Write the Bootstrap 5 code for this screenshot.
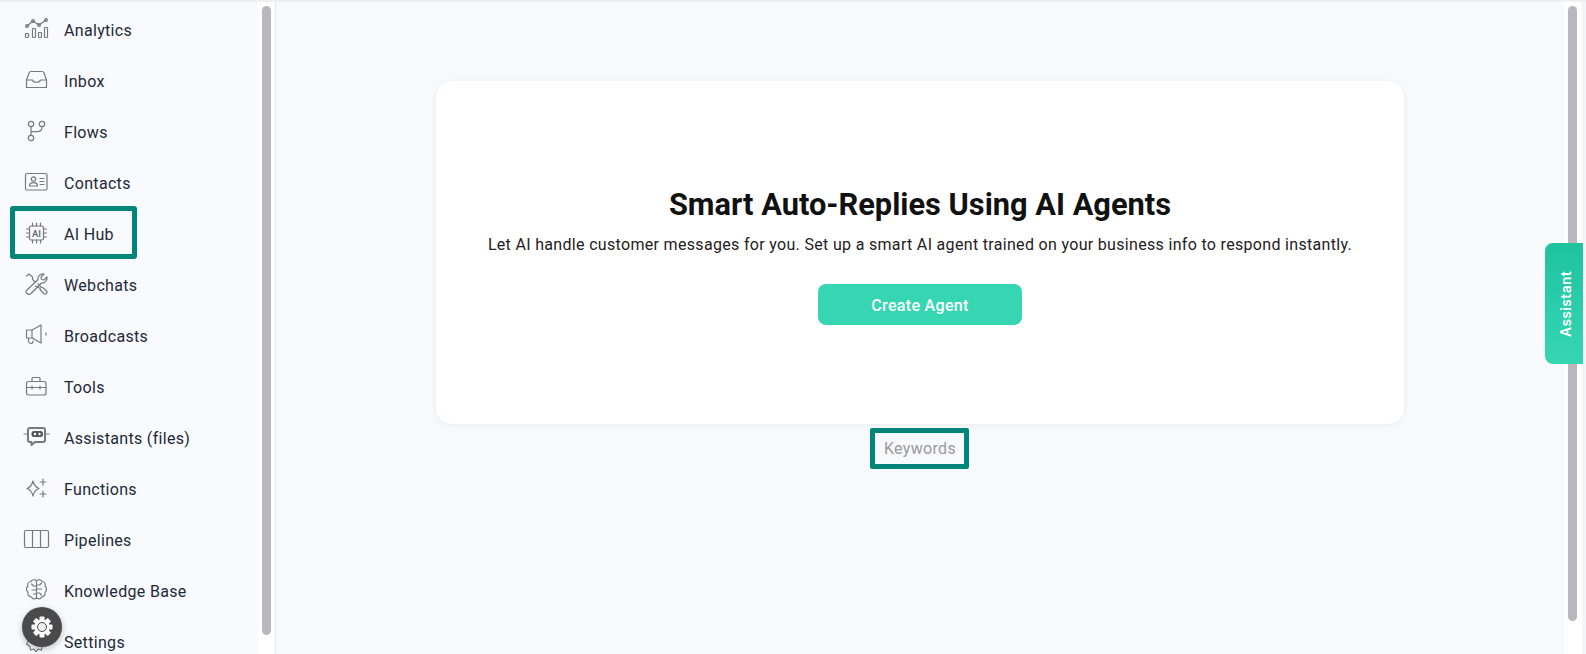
<!DOCTYPE html>
<html lang="en">
<head>
    <meta charset="UTF-8">
    <meta name="viewport" content="width=device-width, initial-scale=1.0">
    <title>AI Hub</title>
    <link href="https://cdn.jsdelivr.net/npm/bootstrap@5.3.0/dist/css/bootstrap.min.css" rel="stylesheet">
    <style>
        html, body { height: 100%; }
        body { font-family: Roboto, "Liberation Sans", sans-serif; font-size: 16px; letter-spacing: .32px; color: #1f2937; background: #fff; overflow: hidden; }
        .app-shell { height: 100vh; position: relative; }
        .top-strip { height: 2px; background: #eef0f3; flex: none; }
        .side-panel { width: 258px; background: #f8fafd; padding-top: 3px; overflow: hidden; flex: none; }
        .side-link { height: 51px; padding: 0 0 0 22px; color: #1f2937; position: relative; flex: none; }
        .side-link:hover { color: #1f2937; }
        .side-link svg { width: 28px; height: 24px; margin-right: 14px; margin-bottom: 6px; flex: none; fill: none; stroke: #78787f; stroke-width: 1.2; stroke-linecap: round; stroke-linejoin: round; }
        .side-link svg text { font-family: Roboto, sans-serif; font-size: 9.5px; font-weight: 500; letter-spacing: 0; fill: #5f5f68; stroke: none; }
        .mark-hub { position: absolute; left: 10px; top: -3px; width: 127px; height: 53px; border: 5px solid #00857a; border-radius: 3px; }
        .rail { width: 18px; padding: 4px 0 0 4px; background: #fff; flex: none; }
        .rail-left { border-right: 1px solid #e6e8eb; }
        .rail-thumb { width: 9px; background: #b9b8be; border-radius: 5px; }
        .thumb-left { height: 629px; }
        .thumb-right { height: 615px; }
        .edge-fade { width: 4px; background: #f4f5f6; flex: none; }
        .main-area { background: #f8f9fb; padding-top: 79px; min-width: 0; }
        .hero-box { width: 968px; height: 343px; background: #fff; border-radius: 16px; box-shadow: 0 1px 6px rgba(0, 0, 0, .06); padding-top: 106px; flex: none; }
        .hero-title { font-size: 30.8px; font-weight: 700; line-height: 36px; letter-spacing: 0; color: #111; margin-bottom: 10px; }
        .hero-text { line-height: 24px; color: #1f2023; margin-bottom: 27px; }
        .btn-agent { width: 204px; height: 41px; background: #36d6b3; color: #fff; font-weight: 500; letter-spacing: .32px; border: 0; border-radius: 8px; padding: 3px 0 0; }
        .btn-agent:hover { background: #36d6b3; color: #fff; }
        .keyword-tab { margin-top: 4px; margin-right: 2px; padding-left: 2px; width: 99px; height: 41px; border: 5px solid #00857a; border-radius: 2px; color: #9a9aa2; }
        .gear-fab { position: absolute; left: 22px; top: 607px; width: 40px; height: 40px; border-radius: 50%; background: #4a4a4a; box-shadow: 0 2px 6px rgba(0, 0, 0, .25); }
        .assistant-tab { position: absolute; top: 243px; right: 3px; width: 38px; height: 121px; padding-right: 3px; border-radius: 0 8px 8px 0; background: linear-gradient(#36d6b3, #1fc29f); color: #fff; font-family: Inter, sans-serif; font-size: 14px; font-weight: 600; letter-spacing: .3px; writing-mode: vertical-rl; transform: rotate(180deg); }
    </style>
</head>
<body>
    <div class="app-shell d-flex flex-column">
        <div class="top-strip"></div>
        <div class="d-flex flex-grow-1" style="min-height: 0">
            <nav class="side-panel nav flex-column flex-nowrap">
                <a class="nav-link side-link d-flex align-items-center" href="#">
                    <svg viewBox="0 0 28 24"><path d="M5 10 11 5 17 9 24 4"/><circle cx="5" cy="10" r="1.4"/><circle cx="11" cy="5" r="1.4"/><circle cx="17" cy="9" r="1.4"/><circle cx="24" cy="4" r="1.4"/><rect x="3.5" y="17.5" width="3" height="4" rx=".8"/><rect x="10.5" y="12.5" width="3" height="9" rx=".8"/><rect x="16.5" y="16.5" width="3" height="5" rx=".8"/><rect x="22.5" y="11.5" width="3" height="10" rx=".8"/></svg>
                    Analytics
                </a>
                <a class="nav-link side-link d-flex align-items-center" href="#">
                    <svg viewBox="0 0 28 24"><path d="M4.5 20.5V13L7 6q.5-1.500 2-1.500h11q1.500 0 2 1.500l2.500 7v7.500zM4.500 13h6c1 3 7 3 8 0h6"/></svg>
                    Inbox
                </a>
                <a class="nav-link side-link d-flex align-items-center" href="#">
                    <svg viewBox="0 0 28 24"><circle cx="9" cy="6" r="2.700"/><circle cx="20" cy="6" r="2.700"/><circle cx="9" cy="20" r="2.700"/><path d="M9 8.700v8.600M20 8.700c0 3.300-2 5-5 5H9"/></svg>
                    Flows
                </a>
                <a class="nav-link side-link d-flex align-items-center" href="#">
                    <svg viewBox="0 0 28 24"><rect x="3.500" y="4.500" width="21.500" height="16.500" rx="1.500"/><circle cx="11.500" cy="10" r="2.200"/><path d="M7.500 17c0-4.500 8-4.500 8 0zM18 9.500h4M18 12.500h4M18 15.500h4"/></svg>
                    Contacts
                </a>
                <a class="nav-link side-link d-flex align-items-center" href="#">
                    <svg viewBox="0 0 28 24"><rect x="7.500" y="6" width="14" height="14" rx="1.500"/><path d="M10.500 3v3M14.500 3v3M18.500 3v3M10.500 20v3M14.500 20v3M18.500 20v3M4.500 9h3M4.500 13h3M4.500 17h3M21.500 9h3M21.500 13h3M21.500 17h3"/><text x="14.500" y="16.500" text-anchor="middle">AI</text></svg>
                    AI Hub
                    <span class="mark-hub"></span>
                </a>
                <a class="nav-link side-link d-flex align-items-center" href="#">
                    <svg viewBox="0 0 28 24"><path d="M4.500 5 7 3l3.500 3v2.300l2.500 2.700M16 13l3.500 3.500 1.500.2 3.500 3.300a1.800 1.800 0 0 1-2.800 2.300L18.200 19v-1.500L13.500 15"/><path d="M4.500 19.500 16 8.500c-.5-3 2-6 6-5.500l-3 3 .5 2.500 2.500.5 3-3c.5 4-2.500 6.500-5.500 6L8.500 23c-2 1.500-5.500-1.500-4-3.500z"/></svg>
                    Webchats
                </a>
                <a class="nav-link side-link d-flex align-items-center" href="#">
                    <svg viewBox="0 0 28 24"><path d="M4.500 8h5.500v8H4.500zM10 8l9-5v18l-9-5M7 16c-1.500 3 0 5.500 2 5.500 1 0 2-1 2-2.500M24 11v2"/></svg>
                    Broadcasts
                </a>
                <a class="nav-link side-link d-flex align-items-center" href="#">
                    <svg viewBox="0 0 28 24"><rect x="4.500" y="8.500" width="19.500" height="13.500" rx="2"/><path d="M10 8.500v-3a1 1 0 0 1 1-1h6a1 1 0 0 1 1 1v3M4.500 14.500H24M10 13v3M18 13v3"/></svg>
                    Tools
                </a>
                <a class="nav-link side-link d-flex align-items-center" href="#">
                    <svg viewBox="0 0 28 24"><path d="M8 4h13a2 2 0 0 1 2 2v10a2 2 0 0 1-2 2h-8l-3.500 3v-3H8a2 2 0 0 1-2-2V6a2 2 0 0 1 2-2z" stroke-width="2"/><path d="M2 10h4M23 10h4"/><rect x="9.500" y="7" width="11.500" height="6" rx="2.500" fill="#55555c" stroke="none"/><circle cx="13" cy="10" r="1.200" fill="#f8fafd" stroke="none"/><circle cx="17.500" cy="10" r="1.200" fill="#f8fafd" stroke="none"/></svg>
                    Assistants (files)
                </a>
                <a class="nav-link side-link d-flex align-items-center" href="#">
                    <svg viewBox="0 0 28 24"><path d="M11 6q1.500 6 6 7.500-4.500 1.500-6 7.500-1.500-6-6-7.500 4.500-1.500 6-7.500zM21 4v6M18 7h6M21 16v6M18 19h6"/></svg>
                    Functions
                </a>
                <a class="nav-link side-link d-flex align-items-center" href="#">
                    <svg viewBox="0 0 28 24"><rect x="2.500" y="4.500" width="24" height="17" rx="1.500"/><path d="M10.500 4.500v17M18.500 4.500v17"/></svg>
                    Pipelines
                </a>
                <a class="nav-link side-link d-flex align-items-center" href="#">
                    <svg viewBox="0 0 28 24"><path d="M14.500 4c-1.500-2-5-1.500-5.500.5-2.500 0-4 2.500-3 4.500-2 1.500-2 5 0 6.500-.5 2.500 1 4.500 3.500 4.500 1 2.500 4 2.500 5 .5 1 2 4 2 5-.5 2.500 0 4-2 3.500-4.500 2-1.500 2-5 0-6.500 1-2-.5-4.500-3-4.500-.5-2-4-2.500-5.500-.5zM14.500 4v17.500M14.500 9h-3l-2-2M14.500 13H10M14.500 17h-3M14.500 8h3l2-2M14.500 12h5M14.500 16h3l2 2"/></svg>
                    Knowledge Base
                </a>
                <a class="nav-link side-link d-flex align-items-center" href="#">
                    <svg viewBox="0 0 28 24"><circle cx="14" cy="13" r="3"/><path d="M14 4l2 3 3.500-1 .5 3.500 3.500 1.500-2 3 2 3-3.500 1.500-.5 3.500-3.500-1-2 3-2-3-3.500 1-.5-3.500L4.500 16l2-3-2-3L8 8.500 8.500 5 12 6z"/></svg>
                    Settings
                </a>
            </nav>
            <div class="rail rail-left"><div class="rail-thumb thumb-left"></div></div>
            <main class="main-area flex-grow-1 d-flex flex-column align-items-center">
                <section class="hero-box text-center">
                    <h1 class="hero-title">Smart Auto-Replies Using AI Agents</h1>
                    <p class="hero-text">Let AI handle customer messages for you. Set up a smart AI agent trained on your business info to respond instantly.</p>
                    <button class="btn btn-agent" type="button">Create Agent</button>
                </section>
                <div class="keyword-tab d-flex align-items-center justify-content-center">Keywords</div>
            </main>
            <div class="rail"><div class="rail-thumb thumb-right"></div></div>
            <div class="edge-fade"></div>
        </div>
        <div class="gear-fab d-flex align-items-center justify-content-center">
            <svg width="24" height="24" viewBox="0 0 24 24"><g fill="#fff"><circle cx="12" cy="12" r="7.500"/><rect x="9.500" y="1.500" width="5" height="21" rx="1"/><rect x="9.500" y="1.500" width="5" height="21" rx="1" transform="rotate(45 12 12)"/><rect x="9.500" y="1.500" width="5" height="21" rx="1" transform="rotate(90 12 12)"/><rect x="9.500" y="1.500" width="5" height="21" rx="1" transform="rotate(135 12 12)"/></g><circle cx="12" cy="12" r="4.500" fill="#f0f0f0" stroke="#4a4a4a" stroke-width="1"/></svg>
        </div>
        <div class="assistant-tab d-flex align-items-center justify-content-center">Assistant</div>
    </div>
    <script src="https://cdn.jsdelivr.net/npm/bootstrap@5.3.0/dist/js/bootstrap.bundle.min.js"></script>
</body>
</html>
